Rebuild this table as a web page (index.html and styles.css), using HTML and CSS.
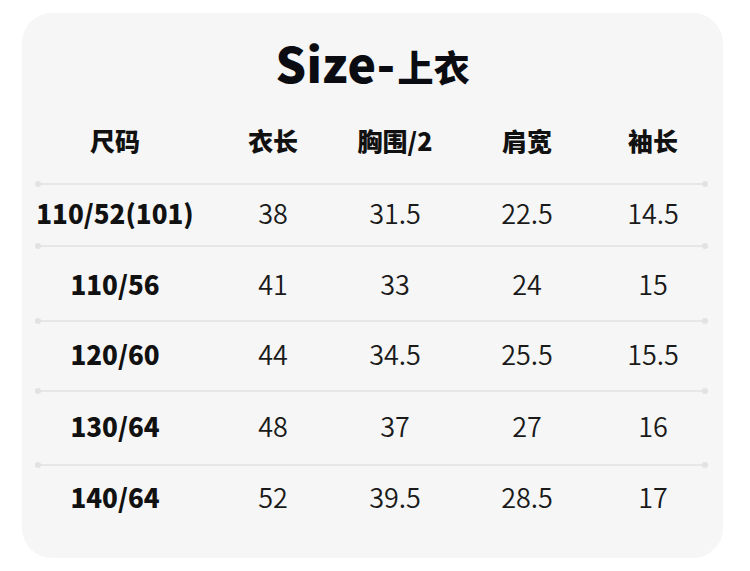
FILE: index.html
```html
<!DOCTYPE html>
<html lang="zh">
<head>
<meta charset="utf-8">
<link rel="stylesheet" href="styles.css">
</head>
<body>
<div class="card">
  <h1 class="title"><span class="en">Size-</span><span class="zh">上衣</span></h1>
  <div class="row head">
    <div>尺码</div><div>衣长</div><div>胸围/2</div><div>肩宽</div><div>袖长</div>
  </div>
  <div class="sep"></div>
  <div class="row r1"><div class="sz">110/52(101)</div><div>38</div><div>31.5</div><div>22.5</div><div>14.5</div></div>
  <div class="sep"></div>
  <div class="row r2"><div class="sz">110/56</div><div>41</div><div>33</div><div>24</div><div>15</div></div>
  <div class="sep"></div>
  <div class="row r3"><div class="sz">120/60</div><div>44</div><div>34.5</div><div>25.5</div><div>15.5</div></div>
  <div class="sep"></div>
  <div class="row r4"><div class="sz">130/64</div><div>48</div><div>37</div><div>27</div><div>16</div></div>
  <div class="sep"></div>
  <div class="row r5"><div class="sz">140/64</div><div>52</div><div>39.5</div><div>28.5</div><div>17</div></div>
</div>
</body>
</html>
```
FILE: styles.css
```css
html, body { margin: 0; padding: 0; background: #ffffff; }
body { font-family: "Noto Sans CJK SC", "Noto Sans", sans-serif; color: #111; }
.card {
  margin: 13px 0 0 22px;
  width: 701px;
  height: 545px;
  background: #f6f6f6;
  border-radius: 30px;
  padding-top: 6px;
  box-sizing: border-box;
}
.title {
  margin: 0;
  height: 86px;
  display: flex;
  justify-content: center;
  align-items: center;
  font-weight: 900;
  color: #0b0c12;
}
.title .en { font-size: 48px; letter-spacing: 0.3px; }
.title .en, .title .zh { line-height: 1; }
.title .zh { font-size: 36px; margin-top: 8px; margin-left: 2px; }
.row {
  display: grid;
  grid-template-columns: 186px 130px 114px 150px 102px;
  align-items: center;
  text-align: center;
  font-size: 27px;
  font-weight: 350;
  color: #1a1a1a;
  box-sizing: border-box;
  padding-bottom: 6px;
}
.row > div { white-space: nowrap; }
.head { height: 78px; padding-bottom: 8px; font-weight: 900; color: #111; font-size: 25px; }
.sz { font-weight: 900; font-size: 26px; color: #111; }
.r1 { height: 60px; }
.r2 { height: 73px; padding-bottom: 0; }
.r3 { height: 68px; }
.r4 { height: 72px; }
.r5 { height: 68px; padding-bottom: 8px; }
.sep {
  position: relative;
  margin: 0 17px 0 15px;
  height: 2px;
  background: #e6e6e6;
}
.sep::before, .sep::after {
  content: "";
  position: absolute;
  top: -2px;
  width: 6px;
  height: 6px;
  border-radius: 50%;
  background: #e2e2e2;
}
.sep::before { left: -2px; }
.sep::after { right: -2px; }
```
